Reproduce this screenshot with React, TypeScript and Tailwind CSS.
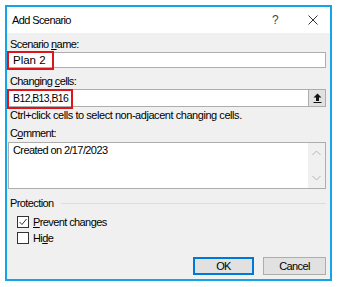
import React from 'react'

const Checkbox: React.FC<{ checked?: boolean }> = ({ checked }) => (
  <span className="w-[12px] h-[12px] border border-[#333333] bg-white flex items-center justify-center">
    {checked && (
      <svg width="10" height="10" viewBox="0 0 10 10">
        <path d="M1.5 5 L4 7.5 L8.5 2" fill="none" stroke="#333333" strokeWidth="1" />
      </svg>
    )}
  </span>
)

const RedMark: React.FC<{ className: string }> = ({ className }) => (
  <div className={'absolute border-2 border-[#e0141b] pointer-events-none ' + className} />
)

export default function App() {
  return (
    <div className="w-[338px] h-[287px] bg-white pt-[5px] pl-[5px] text-[11px] leading-[15px] tracking-[-0.6px] text-black font-['Liberation_Sans',Arial,sans-serif]">
      <div className="w-[327px] h-[276px] border-2 border-[#12a5ea] flex flex-col">
        <div className="h-[26px] shrink-0 bg-white flex items-center pl-[5px]">
          <span className="flex-1">Add Scenario</span>
          <span className="w-[24px] text-[12px] text-[#444444]">?</span>
          <span className="w-[34px] flex justify-center">
            <svg width="10" height="10" viewBox="0 0 10 10">
              <path d="M0.5 0.5 L9.5 9.5 M9.5 0.5 L0.5 9.5" stroke="#333333" strokeWidth="1" />
            </svg>
          </span>
        </div>
        <div className="flex-1 bg-[#f0f0f0] pl-[1px] pr-[4px] flex flex-col">
          <div className="pl-[2px] mt-[4px] h-[15px]">
            Scenario <u>n</u>ame:
          </div>
          <div className="relative h-[16px] bg-white border border-[#adadad] flex items-center pl-[4px] text-[11.5px] tracking-normal">
            Plan 2
            <RedMark className="left-[-2px] top-[-2px] w-[47px] h-[19px]" />
          </div>
          <div className="pl-[2px] mt-[6px] h-[15px]">
            Changing <u>c</u>ells:
          </div>
          <div className="relative h-[18px] bg-white border border-[#adadad] flex items-center pl-[4px]">
            <span className="flex-1 text-[10.5px]">B12,B13,B16</span>
            <span className="w-[18px] h-[18px] -mr-px border border-[#adadad] bg-[#e1e1e1] flex items-center justify-center">
              <svg width="9" height="10" viewBox="0 0 9 10">
                <path d="M4.5 0.5 L8.5 4.5 H6 V8 H3 V4.5 H0.5 Z" fill="#111111" />
                <path d="M0.5 9.5 H8.5" stroke="#111111" strokeWidth="1" />
              </svg>
            </span>
            <RedMark className="left-[-2px] top-[-1px] w-[66px] h-[20px]" />
          </div>
          <div className="pl-[2px] mt-[1px] h-[15px] tracking-[-0.45px]">
            Ctrl+click cells to select non-adjacent changing cells.
          </div>
          <div className="pl-[2px] mt-[3px] h-[15px]">
            C<u>o</u>mment:
          </div>
          <div className="mt-[1px] h-[47px] bg-white border border-[#adadad] flex">
            <span className="flex-1 pl-[4px]">Created on 2/17/2023</span>
            <span className="w-[17px] bg-[#f0f0f0] flex flex-col items-center justify-between py-[7px]">
              <svg width="9" height="6" viewBox="0 0 9 6">
                <path d="M0.5 5 L4.5 1 L8.5 5" fill="none" stroke="#b5b5b5" strokeWidth="1" />
              </svg>
              <svg width="9" height="6" viewBox="0 0 9 6">
                <path d="M0.5 1 L4.5 5 L8.5 1" fill="none" stroke="#b5b5b5" strokeWidth="1" />
              </svg>
            </span>
          </div>
          <div className="mt-[7px] h-[15px] flex items-center pl-[2px]">
            <span>Protection</span>
            <span className="flex-1 ml-[7px] border-t border-[#dcdcdc]" />
          </div>
          <div className="mt-[3px] h-[16px] flex items-center pl-[9px] gap-[4px]">
            <Checkbox checked />
            <span>
              <u>P</u>revent changes
            </span>
          </div>
          <div className="h-[16px] flex items-center pl-[9px] gap-[4px]">
            <Checkbox />
            <span>
              Hi<u>d</u>e
            </span>
          </div>
          <div className="mt-[11px] flex justify-end gap-[9px]">
            <button className="w-[61px] h-[18px] bg-[#e1e1e1] border-2 border-[#0078d7] flex items-center justify-center">
              OK
            </button>
            <button className="w-[63px] h-[18px] bg-[#e1e1e1] border border-[#adadad] flex items-center justify-center">
              Cancel
            </button>
          </div>
        </div>
      </div>
    </div>
  )
}
